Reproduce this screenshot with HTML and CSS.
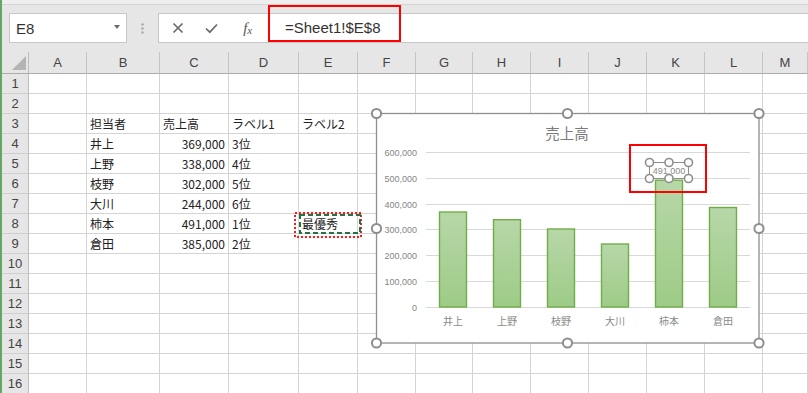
FILE: index.html
```html
<!DOCTYPE html>
<html lang="ja">
<head>
  <meta charset="UTF-8">
  <title>売上高 グラフ</title>
  <link rel="stylesheet" href="styles.css">
</head>
<body>
  <div class="excel">
    <div class="topband"></div>

    <!-- 名前ボックスと数式バー -->
    <div class="formula-bar">
      <div class="namebox">
        <span>E8</span>
        <span class="caret"></span>
      </div>
      <div class="grip">
        <svg width="3" height="11" viewBox="0 0 3 11"><circle cx="1.5" cy="1.5" r="1.2"/><circle cx="1.5" cy="5.5" r="1.2"/><circle cx="1.5" cy="9.5" r="1.2"/></svg>
      </div>
      <div class="formula">
        <div class="fx-buttons">
          <span class="btn"><svg width="12" height="12" viewBox="0 0 12 12"><path d="M1.5 1.5 L10.5 10.5 M10.5 1.5 L1.5 10.5"/></svg></span>
          <span class="btn"><svg width="13" height="11" viewBox="0 0 13 11"><path d="M1 5.5 L4.8 9.2 L12 1.5"/></svg></span>
          <span class="btn fx">f<small>x</small></span>
        </div>
        <div class="input">=Sheet1!$E$8</div>
      </div>
    </div>

    <!-- シート -->
    <div class="sheet">
      <div class="row head">
        <div class="corner"><svg width="14" height="14" viewBox="0 0 14 14"><path d="M0 14 L14 14 L14 0 Z"/></svg></div>
        <div>A</div><div>B</div><div>C</div><div>D</div><div>E</div><div>F</div><div>G</div><div>H</div><div>I</div><div>J</div><div>K</div><div>L</div><div>M</div>
      </div>
      <div class="row"><div class="rh">1</div><div></div><div></div><div></div><div></div><div></div><div></div><div></div><div></div><div></div><div></div><div></div><div></div><div></div></div>
      <div class="row"><div class="rh">2</div><div></div><div></div><div></div><div></div><div></div><div></div><div></div><div></div><div></div><div></div><div></div><div></div><div></div></div>
      <div class="row"><div class="rh">3</div><div></div><div>担当者</div><div>売上高</div><div>ラベル1</div><div>ラベル2</div><div></div><div></div><div></div><div></div><div></div><div></div><div></div><div></div></div>
      <div class="row"><div class="rh">4</div><div></div><div>井上</div><div class="num">369,000</div><div>3位</div><div></div><div></div><div></div><div></div><div></div><div></div><div></div><div></div><div></div></div>
      <div class="row"><div class="rh">5</div><div></div><div>上野</div><div class="num">338,000</div><div>4位</div><div></div><div></div><div></div><div></div><div></div><div></div><div></div><div></div><div></div></div>
      <div class="row"><div class="rh">6</div><div></div><div>枝野</div><div class="num">302,000</div><div>5位</div><div></div><div></div><div></div><div></div><div></div><div></div><div></div><div></div><div></div></div>
      <div class="row"><div class="rh">7</div><div></div><div>大川</div><div class="num">244,000</div><div>6位</div><div></div><div></div><div></div><div></div><div></div><div></div><div></div><div></div><div></div></div>
      <div class="row"><div class="rh">8</div><div></div><div>柿本</div><div class="num">491,000</div><div>1位</div><div>最優秀</div><div></div><div></div><div></div><div></div><div></div><div></div><div></div><div></div></div>
      <div class="row"><div class="rh">9</div><div></div><div>倉田</div><div class="num">385,000</div><div>2位</div><div></div><div></div><div></div><div></div><div></div><div></div><div></div><div></div><div></div></div>
      <div class="row"><div class="rh">10</div><div></div><div></div><div></div><div></div><div></div><div></div><div></div><div></div><div></div><div></div><div></div><div></div><div></div></div>
      <div class="row"><div class="rh">11</div><div></div><div></div><div></div><div></div><div></div><div></div><div></div><div></div><div></div><div></div><div></div><div></div><div></div></div>
      <div class="row"><div class="rh">12</div><div></div><div></div><div></div><div></div><div></div><div></div><div></div><div></div><div></div><div></div><div></div><div></div><div></div></div>
      <div class="row"><div class="rh">13</div><div></div><div></div><div></div><div></div><div></div><div></div><div></div><div></div><div></div><div></div><div></div><div></div><div></div></div>
      <div class="row"><div class="rh">14</div><div></div><div></div><div></div><div></div><div></div><div></div><div></div><div></div><div></div><div></div><div></div><div></div><div></div></div>
      <div class="row"><div class="rh">15</div><div></div><div></div><div></div><div></div><div></div><div></div><div></div><div></div><div></div><div></div><div></div><div></div><div></div></div>
      <div class="row"><div class="rh">16</div><div></div><div></div><div></div><div></div><div></div><div></div><div></div><div></div><div></div><div></div><div></div><div></div><div></div></div>
    </div>

    <!-- 数式バーの赤枠 -->
    <div class="mark-formula"></div>

    <!-- E8 のコピー枠 -->
    <svg class="copy-mark" width="72" height="32" viewBox="292 209 72 32">
      <rect class="dots" x="295" y="213" width="66" height="24"/>
      <rect class="dash" x="300" y="215" width="60" height="18"/>
    </svg>

    <!-- グラフ -->
    <svg class="chart" width="396" height="244" viewBox="370 107 396 244">
      <defs>
        <linearGradient id="barFill" x1="0" y1="0" x2="0" y2="1">
          <stop offset="0" stop-color="#b7d7a8"/>
          <stop offset="1" stop-color="#9ecb87"/>
        </linearGradient>
      </defs>
      <rect class="chart-area" x="376.5" y="113.5" width="382.5" height="229.5"/>
      <text class="chart-title" x="567" y="139">売上高</text>

      <g class="grid-lines">
        <line x1="426" y1="152.5" x2="750" y2="152.5"/>
        <line x1="426" y1="178.5" x2="750" y2="178.5"/>
        <line x1="426" y1="204.5" x2="750" y2="204.5"/>
        <line x1="426" y1="229.5" x2="750" y2="229.5"/>
        <line x1="426" y1="255.5" x2="750" y2="255.5"/>
        <line x1="426" y1="281.5" x2="750" y2="281.5"/>
        <line x1="426" y1="307.5" x2="750" y2="307.5"/>
      </g>
      <g class="axis-y">
        <text x="417" y="155.5">600,000</text>
        <text x="417" y="181.5">500,000</text>
        <text x="417" y="207.5">400,000</text>
        <text x="417" y="232.5">300,000</text>
        <text x="417" y="258.5">200,000</text>
        <text x="417" y="284.5">100,000</text>
        <text x="417" y="310.5">0</text>
      </g>

      <g class="bars">
        <rect x="439.5" y="212" width="27" height="95"/>
        <rect x="493.5" y="219.7" width="27" height="87.3"/>
        <rect x="547.5" y="229" width="27" height="78"/>
        <rect x="601.5" y="244" width="27" height="63"/>
        <rect x="655.5" y="180.2" width="27" height="126.8"/>
        <rect x="709.5" y="207.5" width="27" height="99.5"/>
      </g>
      <g class="axis-x">
        <text x="453" y="325">井上</text>
        <text x="507" y="325">上野</text>
        <text x="561" y="325">枝野</text>
        <text x="615" y="325">大川</text>
        <text x="669" y="325">柿本</text>
        <text x="723" y="325">倉田</text>
      </g>

      <!-- データラベル（選択中） -->
      <rect class="label-box" x="649.5" y="162.5" width="39" height="16"/>
      <text class="data-label" x="669" y="173.5">491,000</text>
      <g class="handles small">
        <circle cx="649.5" cy="162.5" r="4"/>
        <circle cx="669" cy="162.5" r="4"/>
        <circle cx="688.5" cy="162.5" r="4"/>
        <circle cx="649.5" cy="178.5" r="4"/>
        <circle cx="669" cy="178.5" r="4"/>
        <circle cx="688.5" cy="178.5" r="4"/>
      </g>
      <rect class="mark" x="630" y="145" width="76" height="47"/>

      <g class="handles">
        <circle cx="376.5" cy="113.5" r="4.6"/>
        <circle cx="567.5" cy="113.5" r="4.6"/>
        <circle cx="759" cy="113.5" r="4.6"/>
        <circle cx="376.5" cy="228.5" r="4.6"/>
        <circle cx="759" cy="228.5" r="4.6"/>
        <circle cx="376.5" cy="343" r="4.6"/>
        <circle cx="567.5" cy="343" r="4.6"/>
        <circle cx="759" cy="343" r="4.6"/>
      </g>
    </svg>
  </div>
</body>
</html>
```

FILE: styles.css
```css
/* ページ全体 */
body {
  margin: 0;
  font-family: "Liberation Sans", "Noto Sans CJK JP", sans-serif;
  background: #ffffff;
}

.excel {
  position: relative;
  width: 806px;
  height: 393px;
  overflow: hidden;
  border-left: 2px solid #62a862;
  background: #e6e6e6;
}

.topband {
  height: 4px;
  background: #eeeeee;
  border-bottom: 1px solid #d3d3d3;
}

/* 数式バー */
.formula-bar {
  display: flex;
  height: 47px;
  padding-top: 8px;
  box-sizing: border-box;
}

.namebox {
  display: flex;
  align-items: center;
  justify-content: space-between;
  width: 118px;
  height: 30px;
  margin-left: 7px;
  padding: 0 6px;
  box-sizing: border-box;
  background: #ffffff;
  border: 1px solid #c6c6c6;
  font-size: 15px;
  color: #333333;
}

.caret {
  width: 0;
  height: 0;
  border-left: 3.5px solid transparent;
  border-right: 3.5px solid transparent;
  border-top: 4px solid #6a6a6a;
  margin-top: -3px;
}

.grip {
  display: flex;
  align-items: center;
  justify-content: center;
  width: 31px;
  height: 30px;
}

.grip svg {
  fill: #a8a8a8;
}

.formula {
  flex: 1;
  display: flex;
  height: 30px;
  box-sizing: border-box;
  background: #ffffff;
  border: 1px solid #c6c6c6;
  border-right: none;
}

.fx-buttons {
  display: flex;
  align-items: center;
  width: 109px;
  padding-left: 3px;
  box-sizing: border-box;
}

.btn {
  display: flex;
  justify-content: center;
  width: 33px;
}

.btn svg {
  fill: none;
  stroke: #6b6b6b;
  stroke-width: 1.7;
}

.btn.fx {
  width: 41px;
  font-family: "Liberation Serif", serif;
  font-style: italic;
  font-size: 15px;
  color: #555555;
}

.btn.fx small {
  font-size: 11px;
  margin-top: 4px;
}

.input {
  flex: 1;
  padding-left: 16px;
  border-left: 1px solid #d8d8d8;
  font-size: 15px;
  line-height: 28px;
  color: #333333;
}

/* シートのグリッド */
.sheet {
  background: #ffffff;
}

.row {
  display: grid;
  grid-template-columns: 27px 58px 73px 69px 70px 59px 58px 57px 58px 58px 58px 58px 58px 1fr;
  height: 20px;
}

.row > div {
  box-sizing: border-box;
  padding: 0 3px;
  border-right: 1px solid #d4d4d4;
  border-bottom: 1px solid #d4d4d4;
  font-family: "Noto Sans CJK JP", sans-serif;
  font-size: 12px;
  line-height: 19px;
  color: #222222;
  white-space: nowrap;
  overflow: hidden;
}

.row > .num {
  text-align: right;
}

.row > .rh {
  background: #e6e6e6;
  border-right-color: #bcbcbc;
  border-bottom-color: #cfcfcf;
  text-align: center;
  font-family: "Liberation Sans", sans-serif;
  font-size: 13px;
  color: #444444;
}

.row.head {
  height: 22px;
}

.row.head > div {
  background: #e6e6e6;
  border-right-color: #c4c4c4;
  border-bottom-color: #ababab;
  text-align: center;
  font-family: "Liberation Sans", sans-serif;
  font-size: 13px;
  line-height: 21px;
  color: #444444;
}

.row.head > .corner {
  display: flex;
  justify-content: flex-end;
  align-items: flex-end;
  padding: 0 2px 3px 0;
  border-right-color: #bcbcbc;
}

.corner svg {
  fill: #b4b4b4;
}

/* 注釈の赤枠 */
.mark-formula {
  position: absolute;
  left: 266px;
  top: 5px;
  width: 133px;
  height: 37px;
  box-sizing: border-box;
  border: 2px solid #ff0000;
}

.copy-mark {
  position: absolute;
  left: 290px;
  top: 209px;
  fill: none;
}

.copy-mark .dots {
  stroke: #ff1a1a;
  stroke-width: 2;
  stroke-dasharray: 2 2;
}

.copy-mark .dash {
  stroke: #217346;
  stroke-width: 2;
  stroke-dasharray: 5 3;
}

/* グラフ */
.chart {
  position: absolute;
  left: 368px;
  top: 107px;
  font-family: "Liberation Sans", "Noto Sans CJK JP", sans-serif;
}

.chart-area {
  fill: #ffffff;
  stroke: #8e8e8e;
  stroke-width: 1.3;
}

.chart-title {
  font-family: "Noto Sans CJK JP", sans-serif;
  font-size: 14.5px;
  fill: #7a7a7a;
  text-anchor: middle;
}

.grid-lines line {
  stroke: #d9d9d9;
  stroke-width: 1;
}

.axis-y text {
  font-size: 9px;
  fill: #858585;
  text-anchor: end;
}

.bars rect {
  fill: url(#barFill);
  stroke: #70ad47;
  stroke-width: 1.4;
}

.axis-x text {
  font-family: "Noto Sans CJK JP", sans-serif;
  font-size: 10px;
  fill: #8a8a8a;
  text-anchor: middle;
}

.label-box {
  fill: none;
  stroke: #8e8e8e;
  stroke-width: 1;
}

.data-label {
  font-size: 9px;
  fill: #8a8a8a;
  text-anchor: middle;
}

.handles circle {
  fill: #ffffff;
  stroke: #8e8e8e;
  stroke-width: 2;
}

.handles.small circle {
  stroke-width: 1.6;
}

.mark {
  fill: none;
  stroke: #ff0000;
  stroke-width: 2;
}
```
